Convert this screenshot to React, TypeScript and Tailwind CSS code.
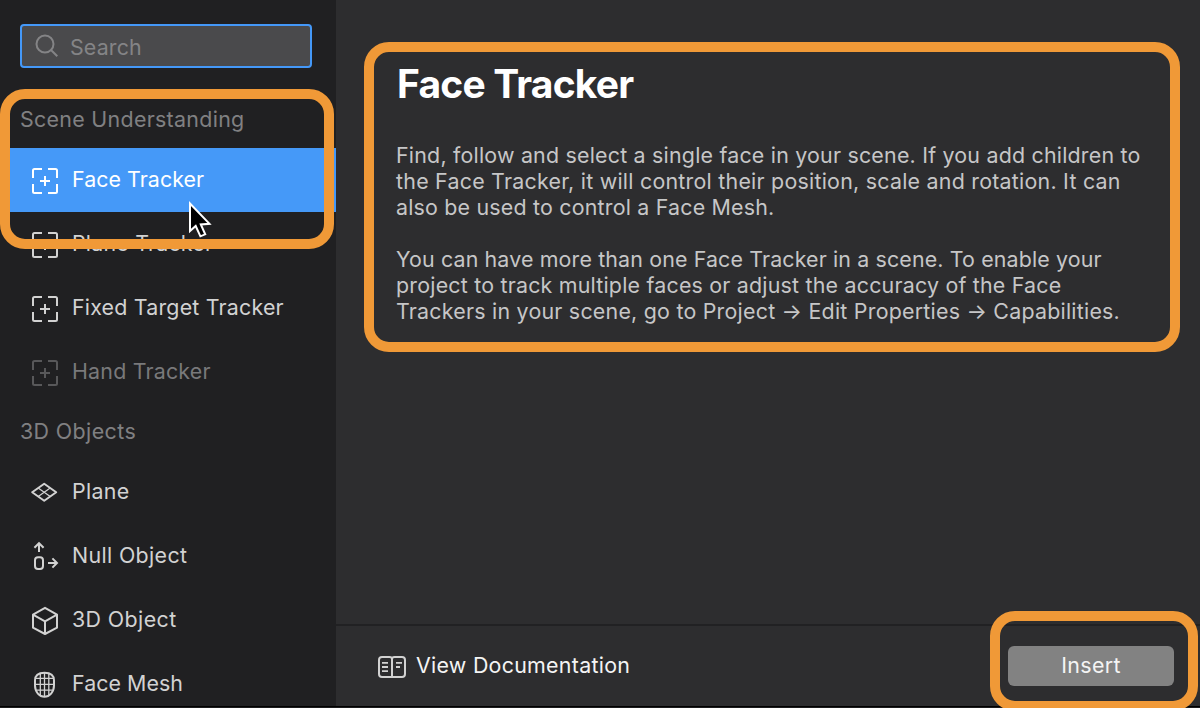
import type { ReactNode } from "react";

const TrackerIcon = () => (
  <g strokeWidth="2">
    <path d="M4 14V6.500Q4 5 5.500 5H13M19 5h7.500Q28 5 28 6.500V14M28 20v7.500q0 1.500-1.500 1.500H19M13 29H5.500Q4 29 4 27.500V20" />
    <path d="M16 12v10M11 17h10" />
  </g>
);

const PlaneIcon = () => (
  <g>
    <path strokeWidth="2" strokeLinejoin="round" d="M3.200 16.200 15.200 7.700l12 8.500-12 8.500z" />
    <path strokeWidth="1.200" d="m9.200 12 12 8.500M21.200 12l-12 8.500" />
  </g>
);

const NullIcon = () => (
  <g strokeWidth="2">
    <path d="M10 12V3.200M5.400 7.800 10 3.200l4.600 4.600" />
    <rect x="6" y="17.300" width="8" height="11.700" rx="3" />
    <path d="M19 23h9M23.400 18.400 28 23l-4.600 4.600" />
  </g>
);

const CubeIcon = () => (
  <path
    strokeWidth="2"
    strokeLinejoin="round"
    d="M16 3.800 28 10.700v13L16 30 4 23.700v-13zM4 10.700l12 6.600 12-6.600M16 17.300V30"
  />
);

const MeshIcon = () => (
  <g>
    <path
      strokeWidth="2"
      d="M15.500 4.700C22 4.700 25 8 25 12.500v5C25 24 20.500 28.700 15.500 28.700S6 24 6 17.500v-5C6 8 9 4.700 15.500 4.700z"
    />
    <path strokeWidth="1.300" d="M11.300 5v22.500M15.500 5v23.500M19.800 5v22.500M6 10.400h19M6 16.400h19M6.500 22.200h18" />
  </g>
);

type ItemProps = {
  label: string;
  icon: ReactNode;
  row?: string;
  text?: string;
};

function Item({ label, icon, row = "text-[#d2d2d2]", text = "tracking-[0.2px]" }: ItemProps) {
  return (
    <li className={`flex h-16 shrink-0 items-center pl-[29px] ${row}`}>
      <svg width="32" height="32" viewBox="0 0 32 32" fill="none" stroke="currentColor" className="shrink-0">
        {icon}
      </svg>
      <span className={`mb-[2px] ml-[11px] whitespace-nowrap ${text}`}>{label}</span>
    </li>
  );
}

export default function App() {
  return (
    <div className="relative flex h-[708px] w-[1200px] flex-col overflow-hidden bg-[#2d2d2f] font-['Inter',sans-serif] text-[21.4px] leading-[26px] tracking-[0.2px]">
      <div className="flex h-[706px] shrink-0">
        <aside className="flex w-[336px] shrink-0 flex-col overflow-hidden bg-[#202022]">
          <div className="mx-5 mt-6 flex h-11 w-[292px] shrink-0 items-center rounded-[4px] border-2 border-[#4498f8] bg-[#4a4a4c] pl-[13px] text-[#848486]">
            <svg width="24" height="24" viewBox="0 0 24 24" fill="none" stroke="currentColor" strokeWidth="2" className="shrink-0">
              <circle cx="10" cy="10" r="8.500" />
              <path d="m16 16 6.300 6.300" />
            </svg>
            <span className="ml-[11px] mt-[2px] tracking-[0.15px]">Search</span>
          </div>
          <h2 className="mt-[38px] h-[42px] shrink-0 pl-5 tracking-[0.3px] text-[#808082]">Scene Understanding</h2>
          <ul className="flex shrink-0 flex-col">
            <Item
              label="Face Tracker"
              icon={<TrackerIcon />}
              row="bg-[#4599f8] text-white"
              text="tracking-[0.05px]"
            />
            <Item label="Plane Tracker" icon={<TrackerIcon />} />
            <Item label="Fixed Target Tracker" icon={<TrackerIcon />} />
            <Item
              label="Hand Tracker"
              icon={<TrackerIcon />}
              row="text-[#58585a]"
              text="tracking-[0.2px] text-[#79797b]"
            />
          </ul>
          <h2 className="h-14 shrink-0 pl-5 pt-[14px] tracking-[0.4px] text-[#808082]">3D Objects</h2>
          <ul className="flex shrink-0 flex-col">
            <Item label="Plane" icon={<PlaneIcon />} text="tracking-[0.3px]" />
            <Item label="Null Object" icon={<NullIcon />} text="tracking-[0.35px]" />
            <Item label="3D Object" icon={<CubeIcon />} text="tracking-[0.4px]" />
            <Item label="Face Mesh" icon={<MeshIcon />} text="tracking-[0.05px]" />
          </ul>
        </aside>
        <main className="flex grow flex-col">
          <article className="grow pl-[60px] pt-[60px] text-[#c6c6c7]">
            <h1 className="h-[82px] pl-px text-[39px] font-bold leading-[48px] tracking-[-0.8px] text-white">
              Face Tracker
            </h1>
            <p className="whitespace-nowrap">
              <span className="tracking-[0.21px]">
                Find, follow and select a single face in your scene. If you add children to
              </span>
              <br />
              <span className="tracking-[0.24px]">
                the Face Tracker, it will control their position, scale and rotation. It can
              </span>
              <br />
              also be used to control a Face Mesh.
            </p>
            <p className="mt-[26px] whitespace-nowrap">
              <span className="tracking-[0.14px]">You can have more than one Face Tracker in a scene. To enable your</span>
              <br />
              <span className="tracking-[0.21px]">project to track multiple faces or adjust the accuracy of the Face</span>
              <br />
              <span className="tracking-[0.23px]">
                Trackers in your scene, go to Project → Edit Properties → Capabilities.
              </span>
            </p>
          </article>
          <footer className="flex h-[82px] shrink-0 items-center border-t-2 border-[#212123] pl-[42px] pr-[26px]">
            <svg width="28" height="22" viewBox="0 0 28 22" fill="none" stroke="#d2d2d2" strokeWidth="2" className="mt-[2px] shrink-0">
              <path d="M14 3Q14 1 11.500 1H4Q1 1 1 4v14q0 3 3 3h20q3 0 3-3V4q0-3-3-3h-7.500Q14 1 14 3zM14 3v18" />
              <path strokeWidth="1.800" d="M4 6.900h6M4 11h6M4 15.100h6M18 6.900h6M18 11h4" />
            </svg>
            <span className="mb-[2px] ml-[10px] tracking-[0.27px] text-[#f4f4f4]">View Documentation</span>
            <button className="ml-auto h-10 w-[166px] rounded-[6px] bg-[#828282] pb-[2px] tracking-[0.35px] text-[#f4f4f4]">
              Insert
            </button>
          </footer>
        </main>
      </div>
      <div className="h-[2px] shrink-0 border-t border-black bg-[#1c1c1e]" />

      <div className="absolute left-0 top-[89px] h-[160px] w-[334px] rounded-[25px] border-[10px] border-[#f09937]" />
      <div className="absolute left-[364px] top-[42px] h-[310px] w-[816px] rounded-[25px] border-[10px] border-[#f09937]" />
      <div className="absolute left-[990px] top-[611px] h-[100px] w-[208px] rounded-[25px] border-[10px] border-[#f09937]" />
      <svg className="absolute left-[186px] top-[198px]" width="30" height="42" viewBox="0 0 30 42">
        <path
          d="M4 5.500V33l5.700-5 4.700 10.300 4.800-2L14.800 26.500l8.700-.700z"
          fill="#000"
          stroke="#fff"
          strokeWidth="2"
        />
      </svg>
    </div>
  );
}
